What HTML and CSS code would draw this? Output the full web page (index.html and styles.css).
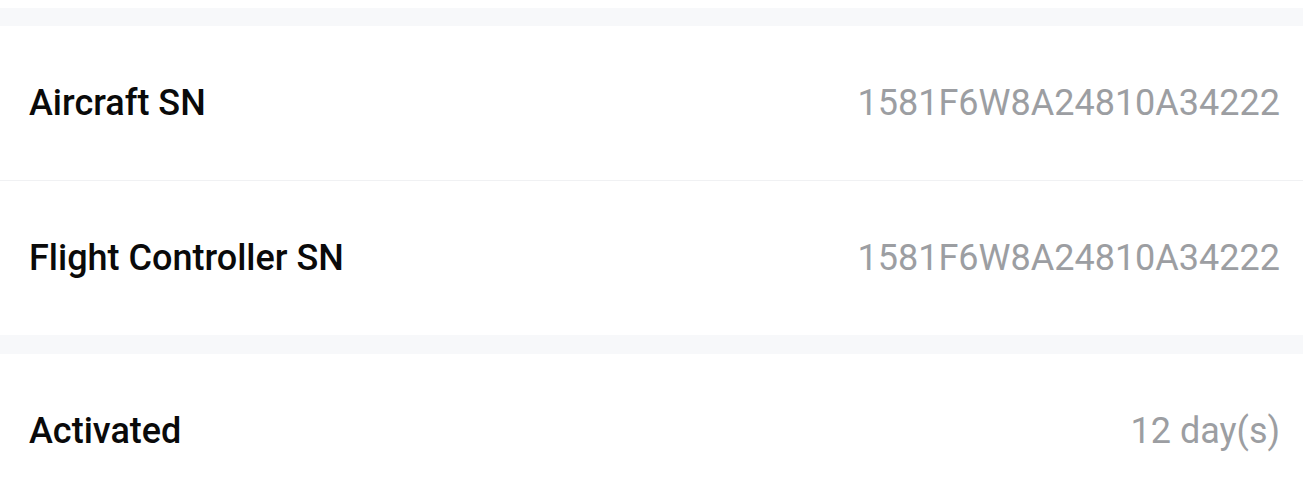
FILE: index.html
```html
<!DOCTYPE html>
<html>
<head>
<meta charset="utf-8">
<link rel="stylesheet" href="styles.css">
</head>
<body>
<div class="page">
  <div class="gap top"></div>
  <div class="group">
    <div class="row">
      <span class="label">Aircraft SN</span>
      <span class="value">1581F6W8A24810A34222</span>
    </div>
    <div class="row">
      <span class="label">Flight Controller SN</span>
      <span class="value">1581F6W8A24810A34222</span>
    </div>
  </div>
  <div class="gap"></div>
  <div class="group">
    <div class="row">
      <span class="label">Activated</span>
      <span class="value">12 day(s)</span>
    </div>
  </div>
</div>
</body>
</html>
```
FILE: styles.css
```css
html, body {
  margin: 0;
  padding: 0;
  background: #ffffff;
  overflow: hidden;
}
.page {
  padding-top: 8px;
  font-family: Roboto, "Liberation Sans", sans-serif;
}
.gap {
  height: 19px;
  background: #f7f8fa;
}
.gap.top {
  height: 18px;
}
.row {
  height: 154px;
  display: flex;
  align-items: center;
  justify-content: space-between;
  padding: 0 23px 0 29px;
  box-sizing: border-box;
}
.row + .row {
  border-top: 1px solid #f0f1f3;
  height: 155px;
}
.label {
  font-size: 36px;
  font-weight: 500;
  color: #0a0a0a;
}
.value {
  font-size: 36px;
  font-weight: 400;
  color: #9c9ea2;
}
```
